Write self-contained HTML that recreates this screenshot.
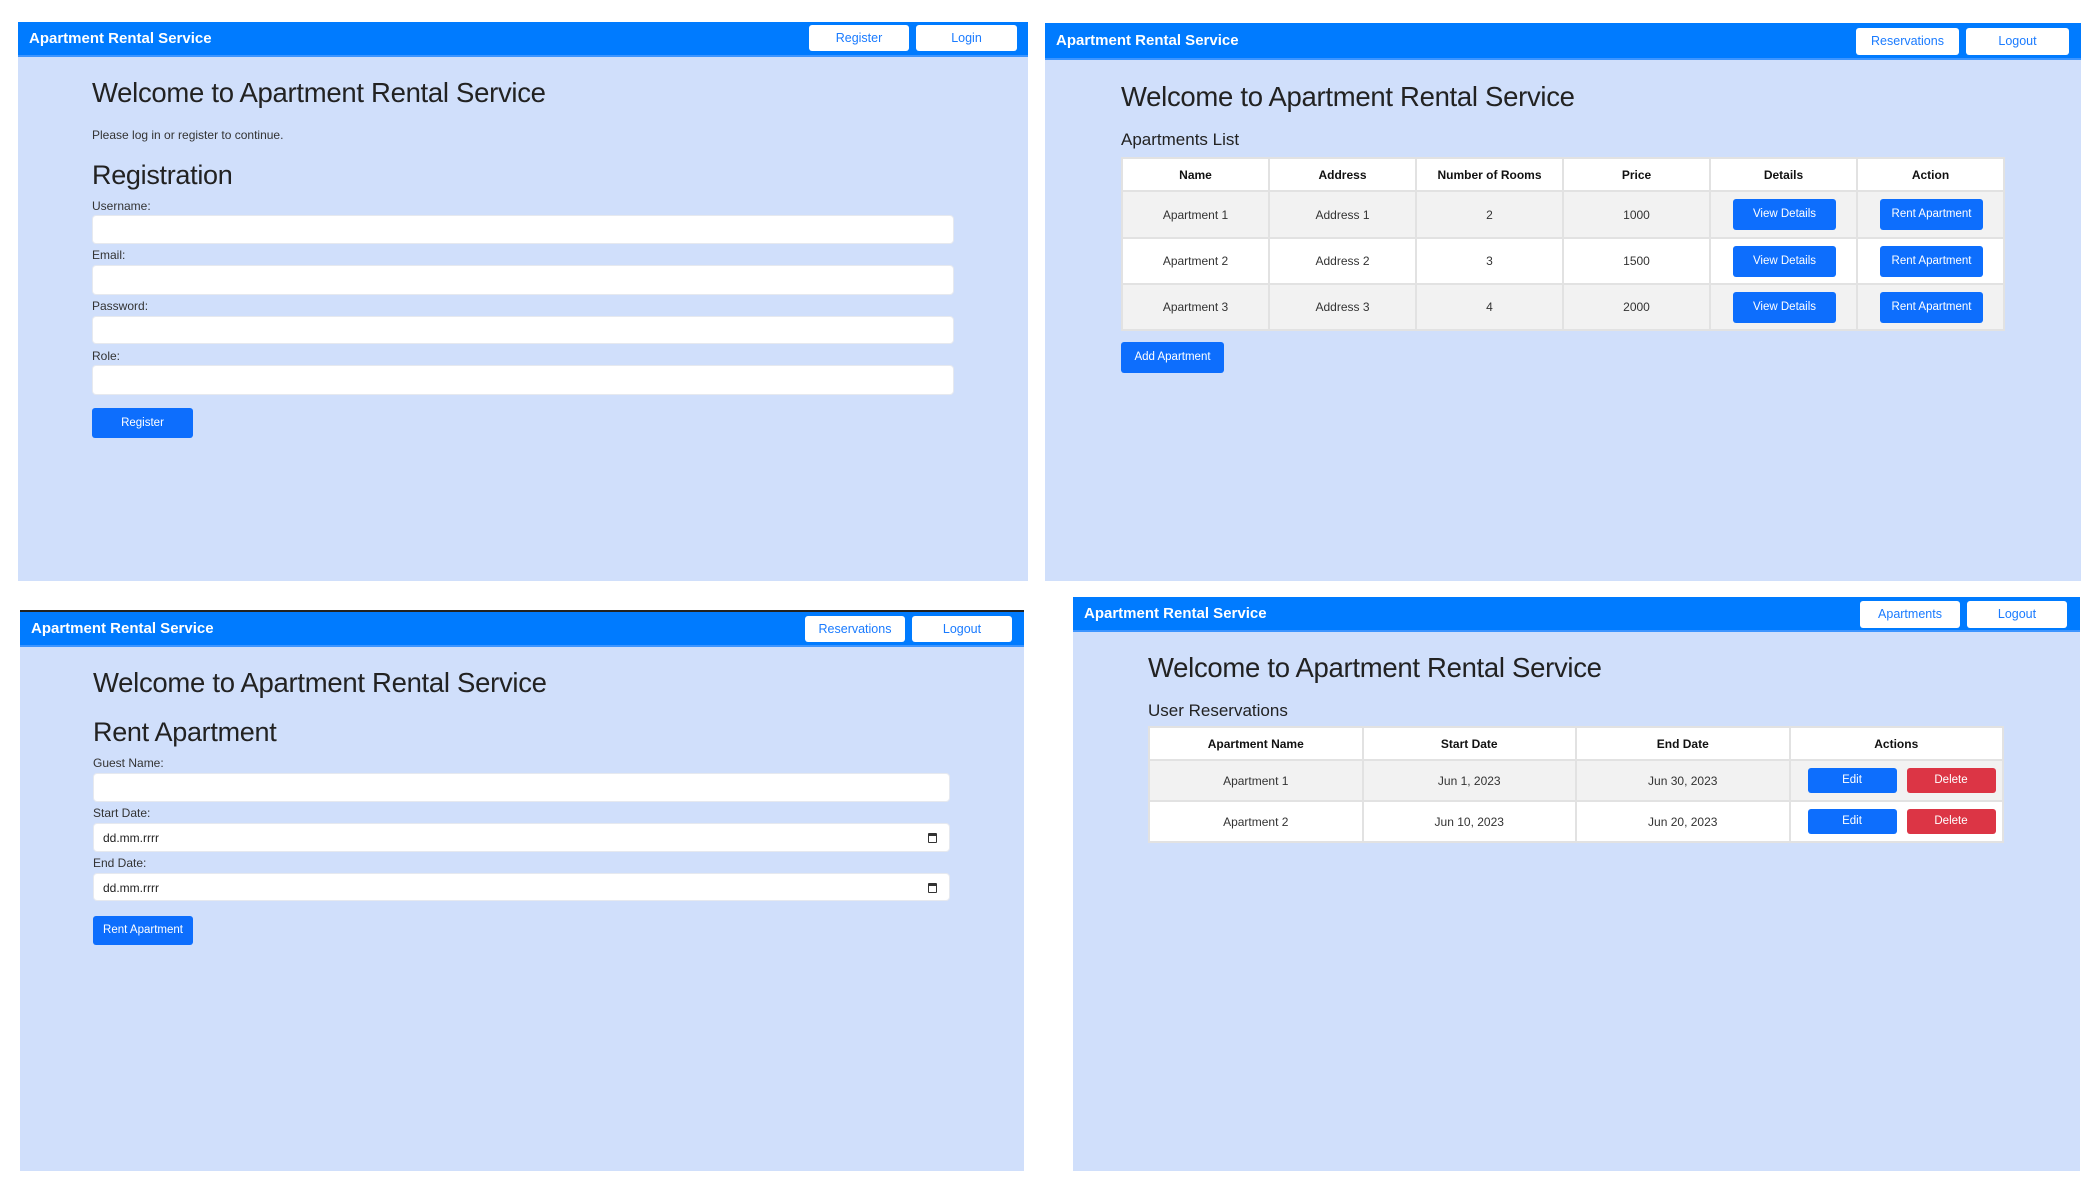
<!DOCTYPE html>
<html><head><meta charset="utf-8"><style>
*{margin:0;padding:0;box-sizing:border-box}
body{width:2100px;height:1188px;background:#fff;position:relative;overflow:hidden;font-family:"Liberation Sans",sans-serif;color:#212529}
.a{position:absolute}
.panel{position:absolute;background:#d0dffb}
.nav{position:absolute;left:0;right:0;top:0;background:#007bff;border-bottom:2px solid #3d95ff}
.nav .t{position:absolute;left:11px;color:#fff;font-weight:bold;font-size:15px}
.nb{position:absolute;background:#fff;border-radius:3px;color:#1a7bff;font-size:12.5px;text-align:center}
h1{position:absolute;font-weight:normal;font-size:27.5px;color:#222;white-space:nowrap;letter-spacing:-0.3px}
h2{position:absolute;font-weight:normal;font-size:27px;color:#222;letter-spacing:-0.3px}
.lbl{position:absolute;font-size:12px;color:#333}
.inp{position:absolute;background:#fff;border:1px solid #e6e9ef;border-radius:4px}
.btn{position:absolute;background:#0d6efd;color:#fff;border-radius:3px;font-size:11.5px;text-align:center}
.red{background:#dc3545}
table{position:absolute;border-collapse:collapse;background:#fff;font-size:12px;color:#333;table-layout:fixed}
td,th{border:2px solid #e2e2e2;text-align:center;position:relative}
th{color:#111;font-weight:bold}
tr.g td{background:#f2f2f2}
.cal{position:absolute;right:12px;top:9px;width:9px;height:10px;border:1.5px solid #333;border-top-width:3px;border-radius:1px}
</style></head><body>

<!-- Panel 1 -->
<div class="panel" style="left:18px;top:22px;width:1010px;height:559px">
  <div class="nav" style="height:35px"><div class="t" style="top:8px">Apartment Rental Service</div>
    <div class="nb" style="left:791px;top:3px;width:100px;height:26px;line-height:26px">Register</div>
    <div class="nb" style="left:898px;top:3px;width:101px;height:26px;line-height:26px">Login</div>
  </div>
  <h1 style="left:74px;top:55px">Welcome to Apartment Rental Service</h1>
  <div class="lbl" style="left:74px;top:106px">Please log in or register to continue.</div>
  <h2 style="left:74px;top:138px">Registration</h2>
  <div class="lbl" style="left:74px;top:177px">Username:</div>
  <div class="inp" style="left:74px;top:193px;width:862px;height:29px"></div>
  <div class="lbl" style="left:74px;top:226px">Email:</div>
  <div class="inp" style="left:74px;top:243px;width:862px;height:30px"></div>
  <div class="lbl" style="left:74px;top:277px">Password:</div>
  <div class="inp" style="left:74px;top:294px;width:862px;height:28px"></div>
  <div class="lbl" style="left:74px;top:327px">Role:</div>
  <div class="inp" style="left:74px;top:343px;width:862px;height:30px"></div>
  <div class="btn" style="left:74px;top:386px;width:101px;height:30px;line-height:30px">Register</div>
</div>

<!-- Panel 2 -->
<div class="panel" style="left:1045px;top:23px;width:1036px;height:558px">
  <div class="nav" style="height:37px"><div class="t" style="top:9px">Apartment Rental Service</div>
    <div class="nb" style="left:811px;top:5px;width:103px;height:27px;line-height:27px">Reservations</div>
    <div class="nb" style="left:921px;top:5px;width:103px;height:27px;line-height:27px">Logout</div>
  </div>
  <h1 style="left:76px;top:58px">Welcome to Apartment Rental Service</h1>
  <div class="a" style="left:76px;top:107px;font-size:17px;color:#222">Apartments List</div>
  <table style="left:76px;top:134px;width:884px">
    <tr style="height:33px"><th>Name</th><th>Address</th><th>Number of Rooms</th><th>Price</th><th>Details</th><th>Action</th></tr>
    <tr class="g" style="height:47px"><td>Apartment 1</td><td>Address 1</td><td>2</td><td>1000</td><td><span class="btn" style="left:22px;top:7px;width:103px;height:31px;line-height:31px">View Details</span></td><td><span class="btn" style="left:22px;top:7px;width:103px;height:31px;line-height:31px">Rent Apartment</span></td></tr>
    <tr style="height:46px"><td>Apartment 2</td><td>Address 2</td><td>3</td><td>1500</td><td><span class="btn" style="left:22px;top:7px;width:103px;height:31px;line-height:31px">View Details</span></td><td><span class="btn" style="left:22px;top:7px;width:103px;height:31px;line-height:31px">Rent Apartment</span></td></tr>
    <tr class="g" style="height:46px"><td>Apartment 3</td><td>Address 3</td><td>4</td><td>2000</td><td><span class="btn" style="left:22px;top:7px;width:103px;height:31px;line-height:31px">View Details</span></td><td><span class="btn" style="left:22px;top:7px;width:103px;height:31px;line-height:31px">Rent Apartment</span></td></tr>
  </table>
  <div class="btn" style="left:76px;top:319px;width:103px;height:31px;line-height:31px">Add Apartment</div>
</div>

<!-- Panel 3 -->
<div class="panel" style="left:20px;top:610px;width:1004px;height:561px">
  <div class="nav" style="height:37px;border-top:2px solid #222"><div class="t" style="top:8px">Apartment Rental Service</div>
    <div class="nb" style="left:785px;top:4px;width:100px;height:26px;line-height:26px">Reservations</div>
    <div class="nb" style="left:892px;top:4px;width:100px;height:26px;line-height:26px">Logout</div>
  </div>
  <h1 style="left:73px;top:57px">Welcome to Apartment Rental Service</h1>
  <h2 style="left:73px;top:107px">Rent Apartment</h2>
  <div class="lbl" style="left:73px;top:146px">Guest Name:</div>
  <div class="inp" style="left:73px;top:163px;width:857px;height:29px"></div>
  <div class="lbl" style="left:73px;top:196px">Start Date:</div>
  <div class="inp" style="left:73px;top:213px;width:857px;height:29px"><span class="a" style="left:9px;top:7px;font-size:12px;color:#222">dd.mm.rrrr</span><span class="cal"></span></div>
  <div class="lbl" style="left:73px;top:246px">End Date:</div>
  <div class="inp" style="left:73px;top:263px;width:857px;height:28px"><span class="a" style="left:9px;top:7px;font-size:12px;color:#222">dd.mm.rrrr</span><span class="cal"></span></div>
  <div class="btn" style="left:73px;top:306px;width:100px;height:29px;line-height:29px">Rent Apartment</div>
</div>

<!-- Panel 4 -->
<div class="panel" style="left:1073px;top:597px;width:1007px;height:574px">
  <div class="nav" style="height:35px"><div class="t" style="top:8px">Apartment Rental Service</div>
    <div class="nb" style="left:787px;top:4px;width:100px;height:27px;line-height:27px">Apartments</div>
    <div class="nb" style="left:894px;top:4px;width:100px;height:27px;line-height:27px">Logout</div>
  </div>
  <h1 style="left:75px;top:55px">Welcome to Apartment Rental Service</h1>
  <div class="a" style="left:75px;top:104px;font-size:17px;color:#222">User Reservations</div>
  <table style="left:75px;top:129px;width:856px">
    <tr style="height:33px"><th>Apartment Name</th><th>Start Date</th><th>End Date</th><th>Actions</th></tr>
    <tr class="g" style="height:41px"><td>Apartment 1</td><td>Jun 1, 2023</td><td>Jun 30, 2023</td><td><span class="btn" style="left:17px;top:7px;width:89px;height:25px;line-height:25px">Edit</span><span class="btn red" style="left:116px;top:7px;width:89px;height:25px;line-height:25px">Delete</span></td></tr>
    <tr style="height:41px"><td>Apartment 2</td><td>Jun 10, 2023</td><td>Jun 20, 2023</td><td><span class="btn" style="left:17px;top:7px;width:89px;height:25px;line-height:25px">Edit</span><span class="btn red" style="left:116px;top:7px;width:89px;height:25px;line-height:25px">Delete</span></td></tr>
  </table>
</div>
</body></html>
